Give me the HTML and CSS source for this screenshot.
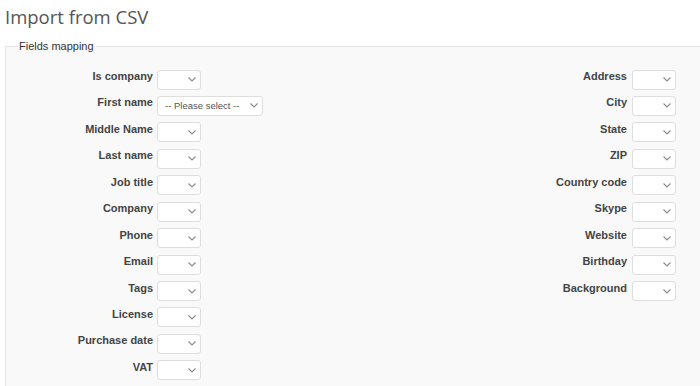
FILE: index.html
```html
<!DOCTYPE html>
<html lang="en">
<head>
    <meta charset="UTF-8">
    <meta name="viewport" content="width=device-width, initial-scale=1.0">
    <title>Import from CSV</title>
    <link rel="stylesheet" href="styles.css">
</head>
<body>
    <h1 class="page-title">Import from CSV</h1>
    <fieldset class="mapping">
        <legend>Fields mapping</legend>
        <div class="columns">
            <div class="col">
                <div class="row"><label>Is company</label><span class="pick"><select></select><svg viewBox="0 0 8 5"><path d="M0.5 0.5 L4 4 L7.5 0.5"/></svg></span></div>
                <div class="row"><label>First name</label><span class="pick wide"><select><option>-- Please select --</option></select><svg viewBox="0 0 8 5"><path d="M0.5 0.5 L4 4 L7.5 0.5"/></svg></span></div>
                <div class="row"><label>Middle Name</label><span class="pick"><select></select><svg viewBox="0 0 8 5"><path d="M0.5 0.5 L4 4 L7.5 0.5"/></svg></span></div>
                <div class="row"><label>Last name</label><span class="pick"><select></select><svg viewBox="0 0 8 5"><path d="M0.5 0.5 L4 4 L7.5 0.5"/></svg></span></div>
                <div class="row"><label>Job title</label><span class="pick"><select></select><svg viewBox="0 0 8 5"><path d="M0.5 0.5 L4 4 L7.5 0.5"/></svg></span></div>
                <div class="row"><label>Company</label><span class="pick"><select></select><svg viewBox="0 0 8 5"><path d="M0.5 0.5 L4 4 L7.5 0.5"/></svg></span></div>
                <div class="row"><label>Phone</label><span class="pick"><select></select><svg viewBox="0 0 8 5"><path d="M0.5 0.5 L4 4 L7.5 0.5"/></svg></span></div>
                <div class="row"><label>Email</label><span class="pick"><select></select><svg viewBox="0 0 8 5"><path d="M0.5 0.5 L4 4 L7.5 0.5"/></svg></span></div>
                <div class="row"><label>Tags</label><span class="pick"><select></select><svg viewBox="0 0 8 5"><path d="M0.5 0.5 L4 4 L7.5 0.5"/></svg></span></div>
                <div class="row"><label>License</label><span class="pick"><select></select><svg viewBox="0 0 8 5"><path d="M0.5 0.5 L4 4 L7.5 0.5"/></svg></span></div>
                <div class="row"><label>Purchase date</label><span class="pick"><select></select><svg viewBox="0 0 8 5"><path d="M0.5 0.5 L4 4 L7.5 0.5"/></svg></span></div>
                <div class="row"><label>VAT</label><span class="pick"><select></select><svg viewBox="0 0 8 5"><path d="M0.5 0.5 L4 4 L7.5 0.5"/></svg></span></div>
            </div>
            <div class="col">
                <div class="row"><label>Address</label><span class="pick"><select></select><svg viewBox="0 0 8 5"><path d="M0.5 0.5 L4 4 L7.5 0.5"/></svg></span></div>
                <div class="row"><label>City</label><span class="pick"><select></select><svg viewBox="0 0 8 5"><path d="M0.5 0.5 L4 4 L7.5 0.5"/></svg></span></div>
                <div class="row"><label>State</label><span class="pick"><select></select><svg viewBox="0 0 8 5"><path d="M0.5 0.5 L4 4 L7.5 0.5"/></svg></span></div>
                <div class="row"><label>ZIP</label><span class="pick"><select></select><svg viewBox="0 0 8 5"><path d="M0.5 0.5 L4 4 L7.5 0.5"/></svg></span></div>
                <div class="row"><label>Country code</label><span class="pick"><select></select><svg viewBox="0 0 8 5"><path d="M0.5 0.5 L4 4 L7.5 0.5"/></svg></span></div>
                <div class="row"><label>Skype</label><span class="pick"><select></select><svg viewBox="0 0 8 5"><path d="M0.5 0.5 L4 4 L7.5 0.5"/></svg></span></div>
                <div class="row"><label>Website</label><span class="pick"><select></select><svg viewBox="0 0 8 5"><path d="M0.5 0.5 L4 4 L7.5 0.5"/></svg></span></div>
                <div class="row"><label>Birthday</label><span class="pick"><select></select><svg viewBox="0 0 8 5"><path d="M0.5 0.5 L4 4 L7.5 0.5"/></svg></span></div>
                <div class="row"><label>Background</label><span class="pick"><select></select><svg viewBox="0 0 8 5"><path d="M0.5 0.5 L4 4 L7.5 0.5"/></svg></span></div>
            </div>
        </div>
    </fieldset>
</body>
</html>
```

FILE: styles.css
```css
body {
    margin: 0;
    background-color: #fff;
    font-family: "Liberation Sans", Arial, sans-serif;
    color: #444;
}
.page-title {
    margin: 0;
    padding: 3px 5px 0;
    font-family: "Open Sans", sans-serif;
    font-weight: normal;
    font-size: 18.5px;
    line-height: 27px;
    color: #555;
}
.mapping {
    margin: 9px 0 0 5px;
    padding: 0 0 4px 11px;
    min-width: 0;
    border: 1px solid #e5e5e5;
    border-right: none;
    background-color: #f9f9f9;
}
.mapping legend {
    padding: 0 2px;
    font-size: 11px;
    line-height: 14px;
    color: #333;
}
.columns {
    display: flex;
    padding-top: 16px;
}
.col {
    width: 474px;
    flex: none;
}
.col + .col {
    width: auto;
    flex: 1;
}
.row {
    display: flex;
    align-items: flex-start;
    height: 20px;
    margin-bottom: 6.45px;
}
.row label {
    width: 136px;
    margin-right: 4px;
    text-align: right;
    font-weight: bold;
    font-size: 11px;
    line-height: 14px;
    color: #444;
}
.col + .col .row label {
    margin-right: 5px;
}
.pick {
    position: relative;
    display: inline-block;
    width: 44px;
    height: 20px;
}
.pick.wide {
    width: 106px;
}
.pick select {
    appearance: none;
    -webkit-appearance: none;
    box-sizing: border-box;
    width: 100%;
    height: 20px;
    margin: 0;
    padding: 0 18px 0 7px;
    border: 1px solid #dedede;
    border-radius: 3px;
    background-color: #fff;
    font-family: "Liberation Sans", Arial, sans-serif;
    font-size: 9.5px;
    color: #555;
    outline: none;
}
.pick svg {
    position: absolute;
    right: 5px;
    top: 8px;
    width: 8px;
    height: 5px;
    fill: none;
    stroke: #8a8a8a;
    stroke-width: 1.1;
    pointer-events: none;
}
```
